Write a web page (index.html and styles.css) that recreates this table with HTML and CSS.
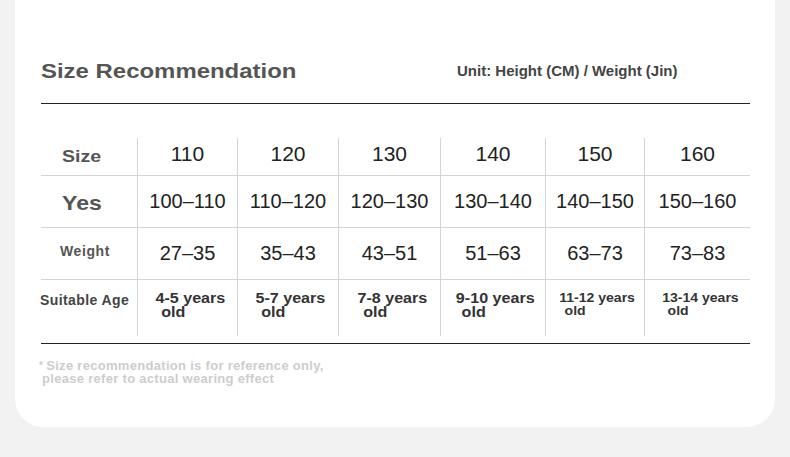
FILE: index.html
```html
<!DOCTYPE html>
<html>
<head>
<meta charset="utf-8">
<link rel="stylesheet" href="styles.css">
</head>
<body>
<div class="card">
  <div class="header">
    <h1 class="title">Size Recommendation</h1>
    <div class="unit">Unit: Height (CM) / Weight (Jin)</div>
  </div>
  <div class="table">
    <div class="cell label label-left"><span class="label-size">Size</span></div>
    <div class="cell num num-top">110</div>
    <div class="cell num num-top">120</div>
    <div class="cell num num-top">130</div>
    <div class="cell num num-top">140</div>
    <div class="cell num num-top">150</div>
    <div class="cell num num-top last">160</div>

    <div class="cell label label-left"><span class="label-yes">Yes</span></div>
    <div class="cell num">100–110</div>
    <div class="cell num">110–120</div>
    <div class="cell num">120–130</div>
    <div class="cell num">130–140</div>
    <div class="cell num">140–150</div>
    <div class="cell num last">150–160</div>

    <div class="cell label label-weight">Weight</div>
    <div class="cell num">27–35</div>
    <div class="cell num">35–43</div>
    <div class="cell num">43–51</div>
    <div class="cell num">51–63</div>
    <div class="cell num">63–73</div>
    <div class="cell num last">73–83</div>

    <div class="cell label label-age bottom">Suitable Age</div>
    <div class="cell age bottom"><span class="age-text">4-5 years<span class="old">old</span></span></div>
    <div class="cell age bottom"><span class="age-text">5-7 years<span class="old">old</span></span></div>
    <div class="cell age bottom"><span class="age-text">7-8 years<span class="old">old</span></span></div>
    <div class="cell age bottom"><span class="age-text">9-10 years<span class="old">old</span></span></div>
    <div class="cell age bottom"><span class="age-text small">11-12 years<span class="old">old</span></span></div>
    <div class="cell age bottom last"><span class="age-text small">13-14 years<span class="old">old</span></span></div>
  </div>
  <div class="rule"></div>
  <p class="note"><span class="star">*</span>Size recommendation is for reference only,<span class="note-2">please refer to actual wearing effect</span></p>
</div>
</body>
</html>
```

FILE: styles.css
```css
* { box-sizing: border-box; }

html, body {
  margin: 0;
  padding: 0;
}

body {
  width: 790px;
  height: 457px;
  overflow: hidden;
  background: #f2f2f2;
  font-family: "Liberation Sans", Arial, sans-serif;
}

.card {
  margin: 0 15px;
  width: 760px;
  height: 427px;
  background: #ffffff;
  border-radius: 0 0 28px 28px;
  padding: 59px 25px 0 26px;
}

.header {
  display: flex;
  align-items: flex-start;
  padding-bottom: 19px;
  border-bottom: 1px solid #222;
  height: 45px;
}

.title {
  margin: 0;
  font-size: 21px;
  line-height: 24px;
  font-weight: bold;
  color: #555;
  width: 416px;
  transform: scaleX(1.14);
  transform-origin: left center;
}

.unit {
  font-size: 15px;
  line-height: 24px;
  font-weight: bold;
  color: #444;
}

.table {
  margin-top: 34px;
  display: grid;
  grid-template-columns: 97px 100px 101px 102px 105px 99px 105px;
  grid-template-rows: 38px 52px 52px 56px;
}

.cell {
  border-right: 1px solid #d4d4d4;
  border-bottom: 1px solid #d4d4d4;
  display: flex;
  align-items: center;
  justify-content: center;
}

.cell.last { border-right: none; }
.cell.bottom { border-bottom: none; }

.label {
  font-weight: bold;
  color: #555;
  padding-right: 8px;
}

.label-left {
  justify-content: flex-start;
  padding-left: 21px;
  padding-right: 0;
}

.label-size {
  display: inline-block;
  font-size: 17px;
  transform: scaleX(1.15);
  transform-origin: left center;
}

.label-yes {
  display: inline-block;
  font-size: 21px;
  transform: scaleX(1.1);
  transform-origin: left center;
  margin-top: 3px;
}

.label-weight {
  font-size: 14px;
  letter-spacing: 0.6px;
  padding-bottom: 6px;
}

.label-age {
  font-size: 14px;
  letter-spacing: 0.4px;
  align-items: flex-start;
  justify-content: flex-start;
  padding: 12px 0 0 0;
  margin-left: -1px;
  color: #444;
}

.num {
  font-size: 20px;
  color: #222;
  padding-bottom: 1px;
}

.num-top {
  font-size: 21px;
  padding-bottom: 6px;
}

.age {
  align-items: flex-start;
  padding: 11px 0 0 5px;
}

.age-text {
  display: inline-block;
  font-size: 14px;
  line-height: 14px;
  font-weight: bold;
  color: #333;
  transform: scaleX(1.15);
}

.age-text.small {
  font-size: 13px;
  line-height: 13px;
  transform: scaleX(1.08);
}

.old {
  display: block;
  padding-left: 5px;
}

.rule {
  margin-top: 7px;
  height: 1px;
  background: #222;
}

.note {
  margin: 15px 0 0 -2px;
  font-size: 13px;
  line-height: 13px;
  font-weight: bold;
  letter-spacing: 0.3px;
  color: #cdcdcd;
}

.star {
  font-size: 10px;
  vertical-align: top;
  margin-right: 3px;
}

.note-2 {
  display: block;
  padding-left: 3px;
}
```
